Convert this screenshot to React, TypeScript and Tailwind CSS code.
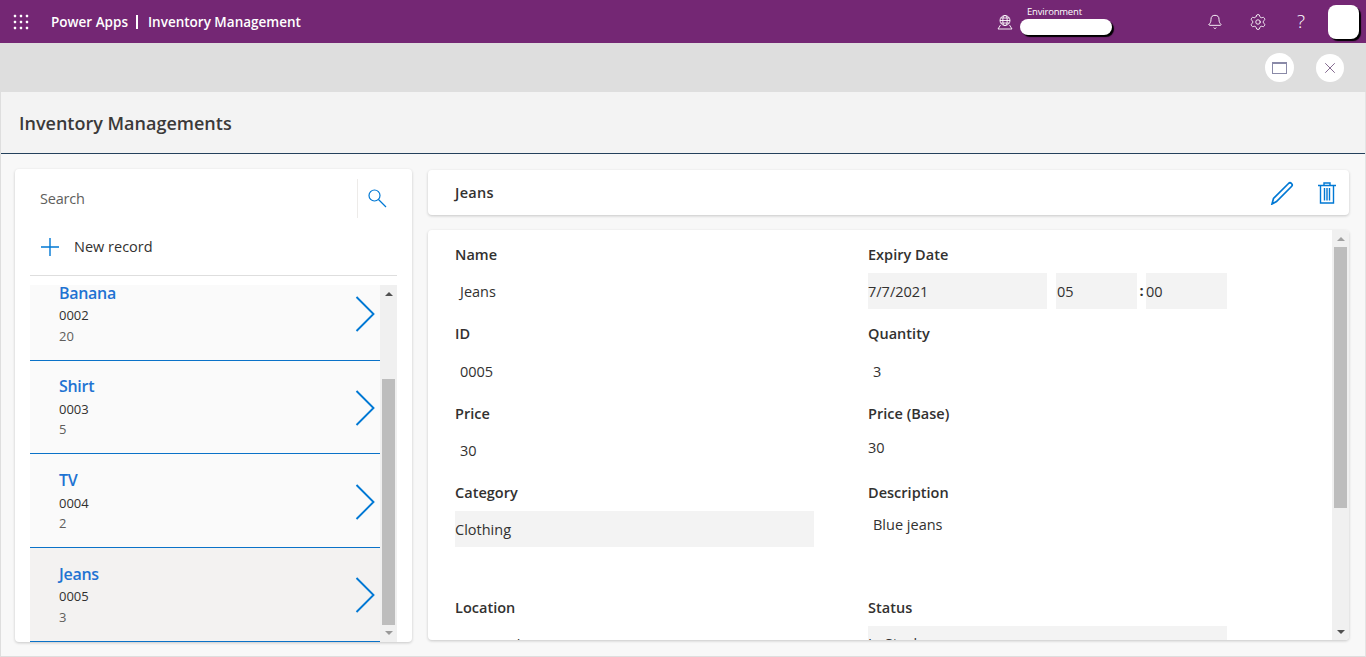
import { Bell, Settings, X } from "lucide-react";

const font = "font-['Open_Sans','Noto_Sans',sans-serif]";

const items = [
  { name: "Banana", id: "0002", qty: "20", selected: false },
  { name: "Shirt", id: "0003", qty: "5", selected: false },
  { name: "TV", id: "0004", qty: "2", selected: false },
  { name: "Jeans", id: "0005", qty: "3", selected: true },
];

const Waffle = () => (
  <svg width="16" height="16" viewBox="0 0 16 16" fill="#fff">
    {[2, 8, 14].map((y) =>
      [2, 8, 14].map((x) => <rect key={`${x}-${y}`} x={x - 1.2} y={y - 1.2} width="2.4" height="2.4" rx="0.6" />)
    )}
  </svg>
);

const Globe = () => (
  <svg width="16" height="16" viewBox="0 0 16 16" fill="none" stroke="#fff" strokeWidth="0.9">
    <circle cx="8" cy="6.5" r="5" />
    <ellipse cx="8" cy="6.5" rx="2.2" ry="5" />
    <path d="M3 6.5h10M3.8 4h8.4M3.8 9h8.4M3.5 11 1 15h14l-2.5-4" />
  </svg>
);

const Chevron = () => (
  <svg className="mt-[2px]" width="20" height="36" viewBox="0 0 20 36" fill="none" stroke="#0078d4" strokeWidth="1.9">
    <path d="M1.5 1 18.5 18 1.5 35" />
  </svg>
);

const Label = ({ children }: { children: string }) => (
  <div className="h-[20px] text-[14.5px] leading-[20px] font-semibold tracking-[0.02px] text-[#323130]">{children}</div>
);

const Scrollbar = ({
  top,
  height,
  bottomPad,
  upColor,
  downColor,
}: {
  top: string;
  height: string;
  bottomPad: string;
  upColor: string;
  downColor: string;
}) => (
  <div className="flex w-[17px] shrink-0 flex-col items-center overflow-hidden bg-[#f0f0f0]">
    <div className={`flex w-full shrink-0 justify-center pt-[7px] ${top}`}>
      <div className={`h-0 w-0 border-x-[4px] border-b-[4px] border-x-transparent ${upColor}`} />
    </div>
    <div className={`w-[13px] shrink-0 bg-[#bdbdbd] ${height}`} />
    <div className={`flex w-full flex-1 items-end justify-center ${bottomPad}`}>
      <div className={`h-0 w-0 border-x-[4px] border-t-[4px] border-x-transparent ${downColor}`} />
    </div>
  </div>
);

const Value = ({ children, className = "" }: { children: string; className?: string }) => (
  <div className={`text-[14.5px] leading-[20px] text-[#323130] ${className}`}>{children}</div>
);

export default function App() {
  return (
    <div className={`flex h-[657px] w-[1366px] flex-col overflow-hidden bg-[#f8f8f8] ${font}`}>
      {/* top bar */}
      <header className="flex h-[43px] shrink-0 items-center bg-[#742774] text-white">
        <div className="ml-[13px] flex w-[38px] items-center">
          <Waffle />
        </div>
        <div className="pt-[1px] text-[13.5px] font-semibold">Power Apps</div>
        <div className="ml-[8px] mr-[10px] h-[14px] w-[2px] bg-white" />
        <div className="pt-[1px] text-[13.5px] font-semibold">Inventory Management</div>
        <div className="ml-auto flex items-center">
          <Globe />
          <div className="ml-[7px] mb-[4px] flex w-[92px] flex-col">
            <div className="h-[13px] pl-[7px] text-[9.5px] leading-[13px] tracking-[-0.2px]">Environment</div>
            <div className="mt-[1px] h-[16px] w-[92px] rounded-full bg-white shadow-[2px_2px_1px_#000]" />
          </div>
          <div className="ml-[89px] flex w-[28px] justify-center">
            <Bell size={16} strokeWidth={1.4} />
          </div>
          <div className="ml-[15px] flex w-[28px] justify-center">
            <Settings size={18} strokeWidth={1.2} />
          </div>
          <div className="ml-[15px] flex w-[28px] justify-center text-[19px] font-light">?</div>
          <div className="ml-[13px] mr-[7px] h-[34px] w-[31px] rounded-lg bg-white shadow-[2px_2px_1px_#000]" />
        </div>
      </header>

      {/* app action bar */}
      <div className="flex h-[49px] shrink-0 items-center justify-end bg-[#dedede] pr-[22px]">
        <div className="flex h-[29px] w-[29px] items-center justify-center rounded-full bg-white">
          <div className="h-[12px] w-[15px] border border-t-[2px] border-[#8a8aa8]" />
        </div>
        <div className="ml-[22px] flex h-[28px] w-[28px] items-center justify-center rounded-full bg-white">
          <X size={18} strokeWidth={1} color="#5c3a6b" />
        </div>
      </div>

      <main className="flex min-h-0 flex-1 flex-col border-x border-b border-[#dedede] border-r-[#e4e4e4]">
        <div className="flex h-[62px] shrink-0 items-center border-b border-[#24415c] bg-[#f3f3f3] pl-[18px] pt-[2px]">
          <h1 className="text-[18px] font-semibold text-[#3b3a39]">Inventory Managements</h1>
        </div>

        <div className="flex min-h-0 flex-1 gap-[16px] pl-[14px] pr-[16px] pt-[15px] pb-[14px]">
          {/* list panel */}
          <section className="flex h-[473px] w-[397px] shrink-0 flex-col rounded bg-white px-[15px] shadow-[0_1px_3px_rgba(0,0,0,0.2)]">
            <div className="flex h-[58px] shrink-0 items-center">
              <div className="flex-1 pl-[10px] pt-[1px] text-[14.5px] tracking-[-0.2px] text-[#605e5c]">Search</div>
              <div className="flex h-[39px] w-[40px] items-center justify-center border-l border-[#edebe9]">
                <svg className="mr-[1px]" width="20" height="20" viewBox="0 0 20 20" fill="none" stroke="#0078d4" strokeWidth="1.2">
                  <circle cx="7.5" cy="7.5" r="5.5" />
                  <path d="M11.5 11.5 19 19" />
                </svg>
              </div>
            </div>
            <div className="flex h-[49px] shrink-0 items-center border-b border-[#dedede] pb-[8px]">
              <svg className="ml-[11px]" width="18" height="18" viewBox="0 0 18 18" stroke="#0078d4" strokeWidth="1.4">
                <path d="M9 0v18M0 9h18" />
              </svg>
              <span className="ml-[15px] text-[14.5px] text-[#323130]">New record</span>
            </div>
            <div className="mt-[9px] flex min-h-0 flex-1 overflow-hidden">
              <div className="min-w-0 flex-1 overflow-hidden">
                <div className="mt-[-18px]">
                  {items.map((item) => (
                    <div
                      key={item.name}
                      className={`flex h-[93.67px] items-center border-b border-[#0a72c8] pr-[5px] ${
                        item.selected ? "bg-[#f3f2f1]" : "bg-[#fafafa]"
                      }`}
                    >
                      <div className="flex-1 pl-[29px]">
                        <div className="text-[16px] leading-[22px] font-semibold tracking-[-0.3px] text-[#1f73d2]">{item.name}</div>
                        <div className="mt-[2.5px] text-[13px] leading-[18px] text-[#323130]">{item.id}</div>
                        <div className="mt-[2.5px] text-[13px] leading-[18px] text-[#605e5c]">{item.qty}</div>
                      </div>
                      <Chevron />
                    </div>
                  ))}
                </div>
              </div>
              <Scrollbar
                top="h-[94px]"
                height="h-[246px]"
                bottomPad="pb-[7px]"
                upColor="border-b-[#505050]"
                downColor="border-t-[#999999]"
              />
            </div>
          </section>

          {/* record panel */}
          <section className="flex h-[471px] min-w-0 flex-1 flex-col pt-[1px]">
            <div className="flex h-[45px] shrink-0 items-center rounded bg-white pl-[27px] pr-[13px] shadow-[0_1px_3px_rgba(0,0,0,0.2)]">
              <span className="flex-1 text-[14.5px] font-semibold tracking-[0.3px] text-[#323130]">Jeans</span>
              <svg width="24" height="24" viewBox="0 0 24 24" fill="none" stroke="#0078d4" strokeWidth="1.7">
                <path d="M2 23 3.5 17.5 18.5 2.5a2 2 0 0 1 3 3L6.5 20.5Z" />
              </svg>
              <svg className="ml-[24px]" width="18" height="22" viewBox="0 0 18 22" fill="none" stroke="#0078d4" strokeWidth="1.4">
                <path d="M0 3.5h18M6 3.5V1h6v2.5M2.5 3.5V21h13V3.5M6.5 6v12.5M9 6v12.5M11.5 6v12.5" />
              </svg>
            </div>

            <div className="mt-[15px] flex min-h-0 flex-1 overflow-hidden rounded bg-white shadow-[0_1px_3px_rgba(0,0,0,0.2)]">
              <div className="min-w-0 flex-1 overflow-hidden pl-[27px] pt-[15px]">
                <div className="grid grid-cols-[413px_1fr]">
                  <div className="h-[79px]">
                    <Label>Name</Label>
                    <Value className="mt-[17px] pl-[5px]">Jeans</Value>
                  </div>
                  <div className="h-[79px]">
                    <Label>Expiry Date</Label>
                    <div className="mt-[8px] flex h-[36px] items-center text-[14.5px] text-[#323130]">
                      <div className="flex h-full w-[179px] items-center bg-[#f3f3f3] pt-[1px]">7/7/2021</div>
                      <div className="ml-[9px] flex h-full w-[81px] items-center bg-[#f3f3f3] pl-[1px] pt-[1px]">05</div>
                      <div className="flex h-full w-[9px] items-center justify-center font-bold">:</div>
                      <div className="flex h-full w-[81px] items-center bg-[#f3f3f3] pt-[1px]">00</div>
                    </div>
                  </div>

                  <div className="h-[80px]">
                    <Label>ID</Label>
                    <Value className="mt-[18px] pl-[5px]">0005</Value>
                  </div>
                  <div className="h-[80px]">
                    <Label>Quantity</Label>
                    <Value className="mt-[18px] pl-[5px]">3</Value>
                  </div>

                  <div className="h-[79px]">
                    <Label>Price</Label>
                    <Value className="mt-[17px] pl-[5px]">30</Value>
                  </div>
                  <div className="h-[79px]">
                    <Label>Price (Base)</Label>
                    <Value className="mt-[14px]">30</Value>
                  </div>

                  <div className="h-[115px]">
                    <Label>Category</Label>
                    <div className="mt-[8px] flex h-[36px] w-[359px] items-center bg-[#f3f3f3] pt-[1px] text-[14.5px] text-[#323130]">Clothing</div>
                  </div>
                  <div className="h-[115px]">
                    <Label>Description</Label>
                    <Value className="mt-[12px] pl-[5px]">Blue jeans</Value>
                  </div>

                  <div>
                    <Label>Location</Label>
                    <Value className="mt-[17px] pl-[5px]">New York</Value>
                  </div>
                  <div>
                    <Label>Status</Label>
                    <div className="mt-[8px] flex h-[36px] w-[359px] items-center bg-[#f3f3f3] text-[14.5px] text-[#323130]">In Stock</div>
                  </div>
                </div>
              </div>
              <Scrollbar
                top="h-[17px]"
                height="h-[261px]"
                bottomPad="pb-[6px]"
                upColor="border-b-[#a0a0a0]"
                downColor="border-t-[#505050]"
              />
            </div>
          </section>
        </div>
      </main>
    </div>
  );
}
